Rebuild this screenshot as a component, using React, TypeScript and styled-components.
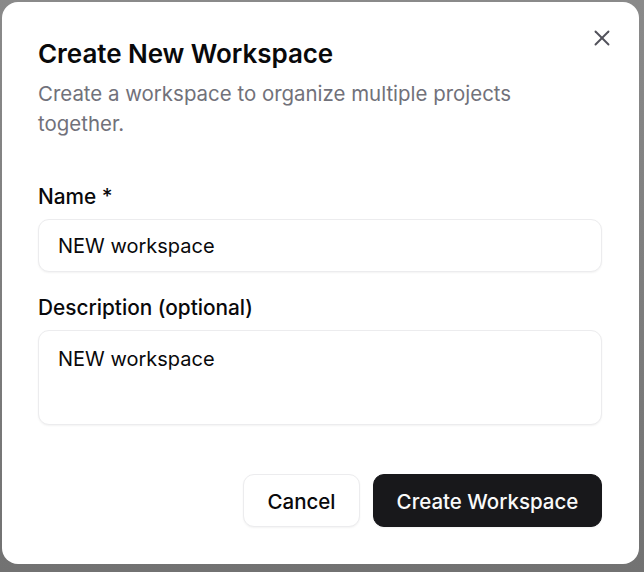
import React from "react";
import styled, { createGlobalStyle } from "styled-components";

const GlobalStyle = createGlobalStyle`
  html, body {
    margin: 0;
    padding: 0;
    height: 100%;
    background: #7b7b7b;
  }
  * {
    box-sizing: border-box;
  }
`;

const Backdrop = styled.div`
  width: 644px;
  height: 572px;
  padding: 2px 5px 8px 2px;
  background: linear-gradient(#8a8a8a, #727272);
  overflow: hidden;
`;

const Dialog = styled.form`
  position: relative;
  height: 100%;
  display: flex;
  flex-direction: column;
  padding: 37px 37px 36px 36px;
  background: #fff;
  border-radius: 16px;
  font-family: Inter, "Liberation Sans", sans-serif;
  color: #09090b;
`;

const Title = styled.h2`
  margin: 0;
  font-size: 26px;
  line-height: 29px;
  font-weight: 600;
  letter-spacing: -0.05px;
`;

const Subtitle = styled.p`
  margin: 11px 0 0;
  width: 520px;
  font-size: 20.45px;
  line-height: 30px;
  color: #71717a;
`;

const Field = styled.div<{ $top: number }>`
  display: flex;
  flex-direction: column;
  gap: 10px;
  margin-top: ${(p) => p.$top}px;
`;

const Label = styled.label`
  font-size: 20.8px;
  line-height: 24px;
  font-weight: 450;
`;

const Input = styled.input`
  width: 100%;
  height: 53px;
  padding: 1px 19px 0;
  border: 1px solid #ececee;
  border-radius: 11px;
  background: #fff;
  box-shadow: 0 1px 2px rgba(0, 0, 0, 0.05);
  font: inherit;
  font-size: 20px;
  color: inherit;
  outline: none;
`;

const TextArea = styled.textarea`
  width: 100%;
  height: 95px;
  padding: 16px 19px;
  border: 1px solid #ececee;
  border-radius: 11px;
  background: #fff;
  box-shadow: 0 1px 2px rgba(0, 0, 0, 0.05);
  font: inherit;
  font-size: 20px;
  line-height: 24px;
  color: inherit;
  outline: none;
  resize: none;
`;

const Actions = styled.div`
  display: flex;
  justify-content: flex-end;
  gap: 13px;
  margin-top: 49px;
`;

const Button = styled.button<{ $primary?: boolean }>`
  width: ${(p) => (p.$primary ? "229px" : "117px")};
  height: 53px;
  padding: 1px 0 0;
  border-radius: 11px;
  border: 1px solid ${(p) => (p.$primary ? "#18181b" : "#ececee")};
  background: ${(p) => (p.$primary ? "#18181b" : "#fff")};
  color: ${(p) => (p.$primary ? "#fafafa" : "#09090b")};
  box-shadow: 0 1px 2px rgba(0, 0, 0, 0.05);
  font: inherit;
  font-size: 20.5px;
  font-weight: 450;
`;

const CloseButton = styled.button`
  position: absolute;
  top: 26px;
  right: 27px;
  width: 20px;
  height: 20px;
  padding: 0;
  display: flex;
  border: 0;
  background: none;
  color: #52525b;
`;

export default function App() {
  return (
    <>
      <GlobalStyle />
      <Backdrop>
        <Dialog>
          <CloseButton type="button" aria-label="Close">
            <svg width="20" height="20" viewBox="0 0 20 20" fill="none" stroke="currentColor" strokeWidth="1.9" strokeLinecap="round">
              <path d="M3.5 3.5 16.5 16.5" />
              <path d="M16.5 3.5 3.5 16.5" />
            </svg>
          </CloseButton>
          <Title>Create New Workspace</Title>
          <Subtitle>Create a workspace to organize multiple projects together.</Subtitle>
          <Field $top={46}>
            <Label htmlFor="name">Name *</Label>
            <Input id="name" defaultValue="NEW workspace" />
          </Field>
          <Field $top={24}>
            <Label htmlFor="description">Description (optional)</Label>
            <TextArea id="description" defaultValue="NEW workspace" />
          </Field>
          <Actions>
            <Button type="button">Cancel</Button>
            <Button type="button" $primary>
              Create Workspace
            </Button>
          </Actions>
        </Dialog>
      </Backdrop>
    </>
  );
}
